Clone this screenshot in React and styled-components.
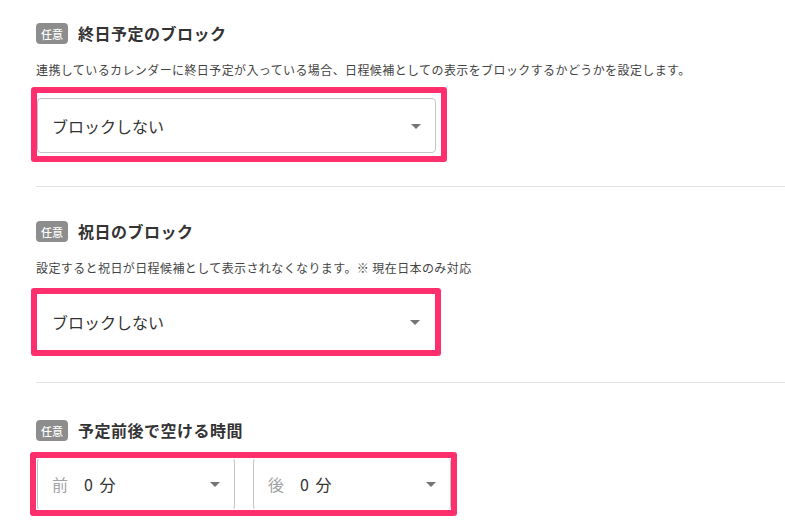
import React from 'react';
import styled, { createGlobalStyle } from 'styled-components';

const GlobalStyle = createGlobalStyle`
  body {
    margin: 0;
    background: #fff;
    font-family: "Noto Sans CJK JP", "Noto Sans", sans-serif;
    color: #333;
  }
`;

const Page = styled.div`
  width: 785px;
  box-sizing: border-box;
  padding: 23px 0 0 36px;
  overflow: hidden;
`;

const Section = styled.section`
  padding-top: ${props => props.$top}px;
`;

const Header = styled.div`
  display: flex;
  align-items: center;
  gap: 10px;
  height: 21px;
`;

const Badge = styled.span`
  display: flex;
  align-items: center;
  justify-content: center;
  width: 32px;
  height: 21px;
  border-radius: 4px;
  background: #8d8d8d;
  color: #fff;
  font-size: 11px;
  font-weight: 500;
`;

const Title = styled.h2`
  margin: 0;
  font-size: 16px;
  font-weight: 700;
  letter-spacing: 0.5px;
  line-height: 21px;
  color: #333;
`;

const Description = styled.p`
  margin: 17px 0 0;
  font-size: 12px;
  line-height: 18px;
  letter-spacing: 0.4px;
  color: #444;
`;

// pink annotation frame drawn round the inputs
const Highlight = styled.div`
  box-sizing: border-box;
  display: flex;
  gap: 18px;
  width: ${props => props.$width}px;
  margin-top: ${props => props.$mt}px;
  margin-left: ${props => props.$ml}px;
  padding: ${props => props.$pad};
  border: 6px solid #ff2e6c;
  border-radius: 3px;
  background: #fff;
`;

const Select = styled.div`
  box-sizing: border-box;
  display: flex;
  align-items: center;
  width: ${props => props.$width}px;
  height: ${props => props.$height}px;
  padding: 0 7px 0 14px;
  border: 1px solid #c4c4c4;
  border-color: ${props =>
    props.$edges === 'none'
      ? 'transparent'
      : props.$edges === 'sides'
      ? 'transparent #c4c4c4'
      : '#c4c4c4'};
  border-radius: 4px;
  background: #fff;
`;

const Prefix = styled.span`
  margin-right: 16px;
  font-size: 16px;
  color: #a3a3a3;
`;

const Value = styled.span`
  flex: 1;
  font-size: 16px;
  word-spacing: 3px;
  color: #333;
`;

const Divider = styled.hr`
  margin: ${props => props.$mt}px 0 0;
  border: 0;
  height: 1px;
  background: #e3e3e3;
`;

const ArrowDown = () => (
  <svg width="24" height="24" viewBox="0 0 24 24">
    <path d="M7 10l5 5 5-5z" fill="#757575" />
  </svg>
);

const App = () => (
  <>
    <GlobalStyle />
    <Page>
      <Section $top={0}>
        <Header>
          <Badge>任意</Badge>
          <Title>終日予定のブロック</Title>
        </Header>
        <Description>
          連携しているカレンダーに終日予定が入っている場合、日程候補としての表示をブロックするかどうかを設定します。
        </Description>
        <Highlight $width={416} $mt={8} $ml={-5} $pad="5px 5px 3px 0">
          <Select $width={399} $height={55}>
            <Value>ブロックしない</Value>
            <ArrowDown />
          </Select>
        </Highlight>
        <Divider $mt={24} />
      </Section>

      <Section $top={34}>
        <Header>
          <Badge>任意</Badge>
          <Title>祝日のブロック</Title>
        </Header>
        <Description>
          設定すると祝日が日程候補として表示されなくなります。※ 現在日本のみ対応
        </Description>
        <Highlight $width={410} $mt={11} $ml={-5} $pad="0">
          <Select $width={398} $height={56} $edges="none">
            <Value>ブロックしない</Value>
            <ArrowDown />
          </Select>
        </Highlight>
        <Divider $mt={26} />
      </Section>

      <Section $top={37}>
        <Header>
          <Badge>任意</Badge>
          <Title>予定前後で空ける時間</Title>
        </Header>
        <Highlight $width={427} $mt={11} $ml={-6} $pad="0 0 0 1px">
          <Select $width={198} $height={52} $edges="sides">
            <Prefix>前</Prefix>
            <Value>0 分</Value>
            <ArrowDown />
          </Select>
          <Select $width={198} $height={52} $edges="sides">
            <Prefix>後</Prefix>
            <Value>0 分</Value>
            <ArrowDown />
          </Select>
        </Highlight>
      </Section>
    </Page>
  </>
);

export default App;
